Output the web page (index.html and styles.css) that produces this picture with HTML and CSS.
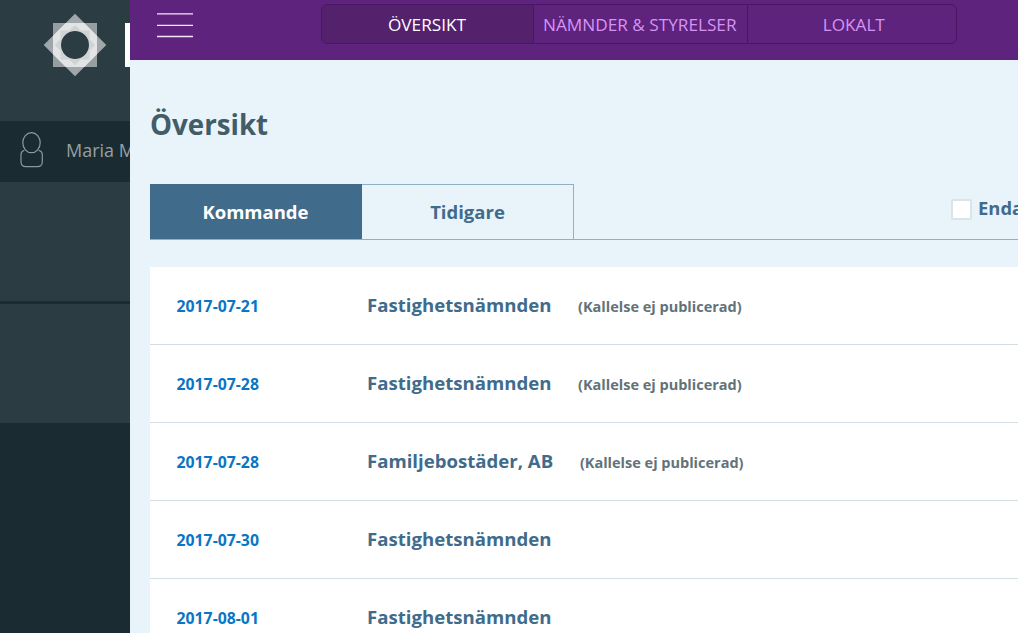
FILE: index.html
```html
<!DOCTYPE html>
<html lang="sv">
<head>
<meta charset="utf-8">
<title>Översikt</title>
<link rel="stylesheet" href="styles.css">
</head>
<body>
<div class="app">
  <aside class="sidebar">
    <div class="brand">
      <svg class="brand-logo" width="64" height="64" viewBox="0 0 64 64">
        <g fill="#fff" fill-rule="evenodd">
          <path fill-opacity=".5" d="M10 10H54V54H10ZM32 18A14 14 0 1 0 32 46A14 14 0 1 0 32 18Z"/>
          <path fill-opacity=".55" d="M32 .7L63.300 32L32 63.300L.7 32ZM32 18A14 14 0 1 0 32 46A14 14 0 1 0 32 18Z"/>
          <path fill-opacity=".4" d="M22.700 10H41.300L54 22.700V41.300L41.300 54H22.700L10 41.300V22.700ZM32 12L26 17.500L17.500 17.500V26L12 32L17.500 38V46.500H26L32 52L38 46.500H46.500V38L52 32L46.500 26V17.500H38Z"/>
        </g>
      </svg>
      <span class="brand-mark"></span>
    </div>
    <div class="user">
      <svg class="user-icon" width="24" height="36" viewBox="0 0 24 36" fill="none" stroke="#8d999d" stroke-width="1.200">
        <ellipse cx="11.500" cy="10.700" rx="8.700" ry="10"/>
        <path d="M4.300 18.300C2 18.800 1 20.500 1 23V29.500C1 33 2.500 34.700 6 34.700H17.500C21 34.700 22.300 33 22.300 29.500V23C22.300 20.500 21 18.800 18.700 18.300"/>
      </svg>
      <span>Maria M</span>
    </div>
    <div class="side-block"></div>
    <div class="side-block"></div>
  </aside>
  <main class="main">
    <header class="topbar">
      <svg class="menu" width="36" height="26" viewBox="0 0 36 26" stroke="#f3e6f8" stroke-width="1.300">
        <path d="M0 1.800H36M0 13.300H36M0 24.500H36"/>
      </svg>
      <nav class="nav">
        <a class="nav-item active">ÖVERSIKT</a>
        <a class="nav-item">NÄMNDER &amp; STYRELSER</a>
        <a class="nav-item">LOKALT</a>
      </nav>
    </header>
    <section class="content">
      <h1 class="title">Översikt</h1>
      <div class="tabs">
        <div class="tab selected">Kommande</div>
        <div class="tab">Tidigare</div>
        <label class="filter"><span class="checkbox"></span><span class="filter-label">Enda</span></label>
      </div>
      <div class="list">
        <div class="row"><span class="date">2017-07-21</span><span class="name">Fastighetsnämnden</span><span class="note">(Kallelse ej publicerad)</span></div>
        <div class="row"><span class="date">2017-07-28</span><span class="name">Fastighetsnämnden</span><span class="note">(Kallelse ej publicerad)</span></div>
        <div class="row"><span class="date">2017-07-28</span><span class="name">Familjebostäder, AB</span><span class="note">(Kallelse ej publicerad)</span></div>
        <div class="row"><span class="date">2017-07-30</span><span class="name">Fastighetsnämnden</span></div>
        <div class="row"><span class="date">2017-08-01</span><span class="name">Fastighetsnämnden</span></div>
      </div>
    </section>
  </main>
</div>
</body>
</html>
```
FILE: styles.css
```css
* { box-sizing: border-box; }
body { margin: 0; font-family: "Open Sans", sans-serif; overflow: hidden; }
.app { display: flex; width: 1018px; height: 633px; overflow: hidden; }
.sidebar { width: 130px; flex: none; overflow: hidden; background: #1a2b32; white-space: nowrap; }
.brand { display: flex; height: 121px; padding: 13px 0 0 43px; background: #2c3c43; }
.brand-logo { flex: none; }
.brand-mark { flex: none; width: 10px; height: 44px; margin: 10px 0 0 18px; background: #fff; }
.user { display: flex; align-items: center; height: 61px; padding-left: 20px; gap: 22px; font-size: 18px; color: #95a0a4; }
.user span { margin-top: -4px; }
.user-icon { flex: none; margin-top: -4px; }
.side-block { height: 119px; background: #2c3c43; }
.side-block + .side-block { margin-top: 3px; }
.main { flex: 1; min-width: 0; overflow: hidden; background: #e8f4fa; }
.topbar { display: flex; height: 60px; padding-left: 27px; background: #5e237c; }
.menu { flex: none; margin-top: 12px; }
.nav { display: grid; grid-template-columns: 211px 213.5px 1fr; flex: none; width: 636px; height: 40px; margin: 4px 0 0 128px; border: 1px solid #491666; border-radius: 6px; overflow: hidden; }
.nav-item { display: flex; align-items: center; justify-content: center; padding-right: 1px; font-size: 17.2px; color: #d693f5; white-space: nowrap; }
.nav-item:last-child { padding-left: 5px; }
.nav-item + .nav-item { border-left: 1px solid #491666; }
.nav-item.active { background: #54216d; color: #fff; }
.content { padding-left: 20px; }
.title { margin: 44px 0 0; height: 40px; line-height: 40px; font-size: 27.7px; font-weight: 700; color: #425c68; }
.tabs { display: flex; height: 56px; margin-top: 40px; border-bottom: 1px solid #8fb1c7; }
.tab { flex: none; width: 212px; display: flex; align-items: center; justify-content: center; padding-bottom: 2px; border: 1px solid #8fb1c7; border-width: 1px 1px 0 0; font-size: 18.5px; font-weight: 700; color: #416b8b; }
.tab.selected { background: #416b8b; border-color: #416b8b; color: #fff; }
.filter { display: flex; flex: none; margin: 14px 0 0 377px; gap: 6px; font-size: 18.4px; font-weight: 700; line-height: 20px; color: #416b8b; }
.checkbox { width: 21px; height: 21px; margin-top: 1px; background: #fff; border: 2px solid #dae5e9; border-radius: 2px; }
.list { margin-top: 26.6px; background: #fff; }
.row { display: flex; align-items: baseline; height: 78.1px; padding: 0 0 0 26.500px; line-height: 75px; border-bottom: 1px solid #d3dfe4; white-space: nowrap; font-weight: 700; }
.date { width: 190.500px; font-size: 15.8px; color: #0876c4; }
.name { font-size: 18.6px; color: #416b8b; }
.note { margin-left: 26.7px; font-size: 14.5px; color: #627279; }
```
